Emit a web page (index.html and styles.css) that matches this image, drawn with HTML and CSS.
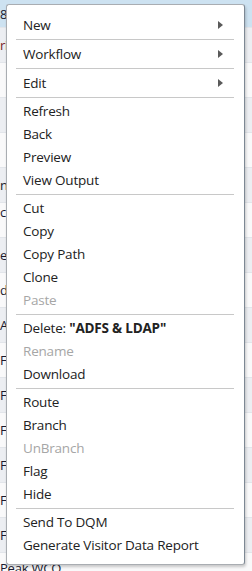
FILE: index.html
```html
<!DOCTYPE html>
<html lang="en">
  <head>
    <meta charset="utf-8" />
    <title>Context Menu</title>
    <link rel="stylesheet" href="styles.css">
  </head>
  <body>
    <div class="page">
      <div class="topbar"><span class="cell">8</span></div>
      <div class="rows">
        <div class="row"><span class="cell red">ri:</span></div>
        <div class="row"><span class="cell"></span></div>
        <div class="row"><span class="cell"></span></div>
        <div class="row"><span class="cell"></span></div>
        <div class="row"><span class="cell">n</span></div>
        <div class="row"><span class="cell top">c</span></div>
        <div class="row"><span class="cell">es</span></div>
        <div class="row"><span class="cell">d</span></div>
        <div class="row"><span class="cell">A</span></div>
        <div class="row"><span class="cell">F</span></div>
        <div class="row"><span class="cell">F</span></div>
        <div class="row"><span class="cell">F</span></div>
        <div class="row"><span class="cell">F</span></div>
        <div class="row"><span class="cell">F</span></div>
        <div class="row"><span class="cell">F</span></div>
        <div class="row"><span class="cell last">Peak WCO</span></div>
      </div>

      <div class="menu">
        <div class="item sub">New</div>
        <div class="sep"></div>
        <div class="item sub">Workflow</div>
        <div class="sep"></div>
        <div class="item sub">Edit</div>
        <div class="sep"></div>
        <div class="item">Refresh</div>
        <div class="item">Back</div>
        <div class="item">Preview</div>
        <div class="item">View Output</div>
        <div class="sep"></div>
        <div class="item">Cut</div>
        <div class="item">Copy</div>
        <div class="item">Copy Path</div>
        <div class="item">Clone</div>
        <div class="item disabled">Paste</div>
        <div class="sep"></div>
        <div class="item">Delete: <strong>"ADFS &amp; LDAP"</strong></div>
        <div class="item disabled">Rename</div>
        <div class="item">Download</div>
        <div class="sep"></div>
        <div class="item">Route</div>
        <div class="item">Branch</div>
        <div class="item disabled">UnBranch</div>
        <div class="item">Flag</div>
        <div class="item">Hide</div>
        <div class="sep"></div>
        <div class="item">Send To DQM</div>
        <div class="item">Generate Visitor Data Report</div>
      </div>
    </div>
  </body>
</html>
```

FILE: styles.css
```css
body {
  margin: 0;
  font-family: 'Segoe UI', 'Open Sans', sans-serif;
  font-size: 13.5px;
  letter-spacing: -0.2px;
  color: #222;
  background: #fff;
}

.page {
  position: relative;
  width: 252px;
  height: 571px;
  overflow: hidden;
}

.topbar {
  height: 27px;
  background: #cde2f1;
  display: flex;
  align-items: center;
}

.row {
  height: 35px;
  display: flex;
  align-items: center;
  border-top: 1px solid #e2e5ea;
  box-sizing: border-box;
}

.row:nth-child(odd) {
  background: #eceef2;
}

.row:nth-child(even) {
  background: #f9f9fa;
}

.cell {
  white-space: nowrap;
  font-size: 13px;
  color: #1a1a2e;
}

.cell.red {
  color: #7a1c1c;
}

.cell.top {
  align-self: flex-start;
}

.cell.last {
  align-self: flex-start;
  margin-top: 8px;
  line-height: 14px;
}

/* context menu floats over the grid */
.menu {
  position: absolute;
  left: 6px;
  top: 4px;
  width: 239px;
  height: 561px;
  box-sizing: border-box;
  padding: 8px 0 7px;
  background: #fff;
  border: 1px solid #a9adb2;
  border-right-color: #7d8894;
  border-radius: 3px;
  box-shadow: 1px 2px 3px rgba(0,0,0,0.2);
}

.item {
  position: relative;
  height: 23px;
  line-height: 23px;
  padding-left: 16px;
  white-space: nowrap;
}

.item.sub {
  height: 24px;
  line-height: 24px;
}

.item.sub::after {
  content: '';
  position: absolute;
  right: 21px;
  top: 8px;
  border-left: 5px solid #5a5a5a;
  border-top: 4px solid transparent;
  border-bottom: 4px solid transparent;
}

.item.disabled {
  color: #a6a6a6;
}

.item strong {
  font-weight: 700;
}

.sep {
  height: 1px;
  margin: 2px 10px 2px 9px;
  background: #c8c8c8;
}
```
